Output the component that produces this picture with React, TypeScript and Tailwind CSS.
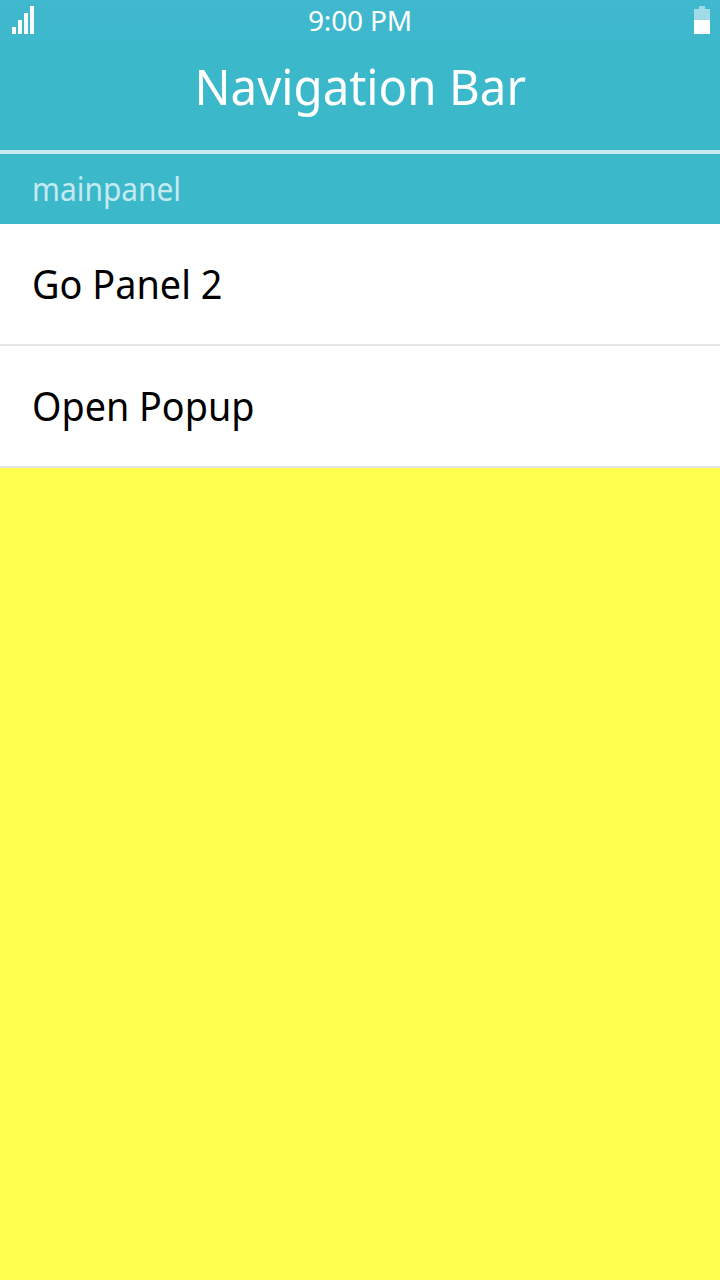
export default function App() {
  return (
    <main className="flex h-[1280px] w-[720px] flex-col overflow-hidden bg-[#ffff4f] font-['Noto_Sans',sans-serif] text-white">
      <div className="grid h-10 grid-cols-3 items-center bg-linear-to-b from-[#40b8ce] to-[#3eb8cd]">
        <svg className="ml-3" width="22" height="28" viewBox="0 0 22 28" fill="#fafafa" shapeRendering="crispEdges">
          <path d="M0 21h4v7H0zM6 14h4v14H6zM12 7h4v21h-4zM18 0h4v28h-4z" />
        </svg>
        <div className="text-center text-[28px] leading-10 tracking-[-0.15px]">9:00 PM</div>
        <svg className="mr-2.5 justify-self-end" width="16" height="28" viewBox="0 0 16 28" fill="#fff" shapeRendering="crispEdges">
          <path d="M5 0h6v3h5v11H0V3h5z" opacity=".5" />
          <path d="M0 14h16v14H0z" />
        </svg>
      </div>
      <header className="flex h-[114px] items-start justify-center border-b-4 border-[#c8ebf1] bg-[#3cb8cb]">
        <h1 className="origin-center scale-x-[0.968] pt-3 text-[49px] leading-[68px]">Navigation Bar</h1>
      </header>
      <div className="flex h-[70px] items-center bg-[#3cb8cb] px-8 text-[32px] text-[#c5eaf0]">
        <span className="origin-left scale-x-[0.934]">mainpanel</span>
      </div>
      <ul className="text-[40px] text-black">
        <li className="flex h-[122px] items-center border-b-2 border-[#e5e5e5] bg-white px-8">
          <span className="origin-left scale-x-[0.946]">Go Panel 2</span>
        </li>
        <li className="flex h-[122px] items-center border-b-2 border-[#e5e5e5] bg-white px-8">
          <span className="origin-left scale-x-[0.943]">Open Popup</span>
        </li>
      </ul>
    </main>
  );
}
